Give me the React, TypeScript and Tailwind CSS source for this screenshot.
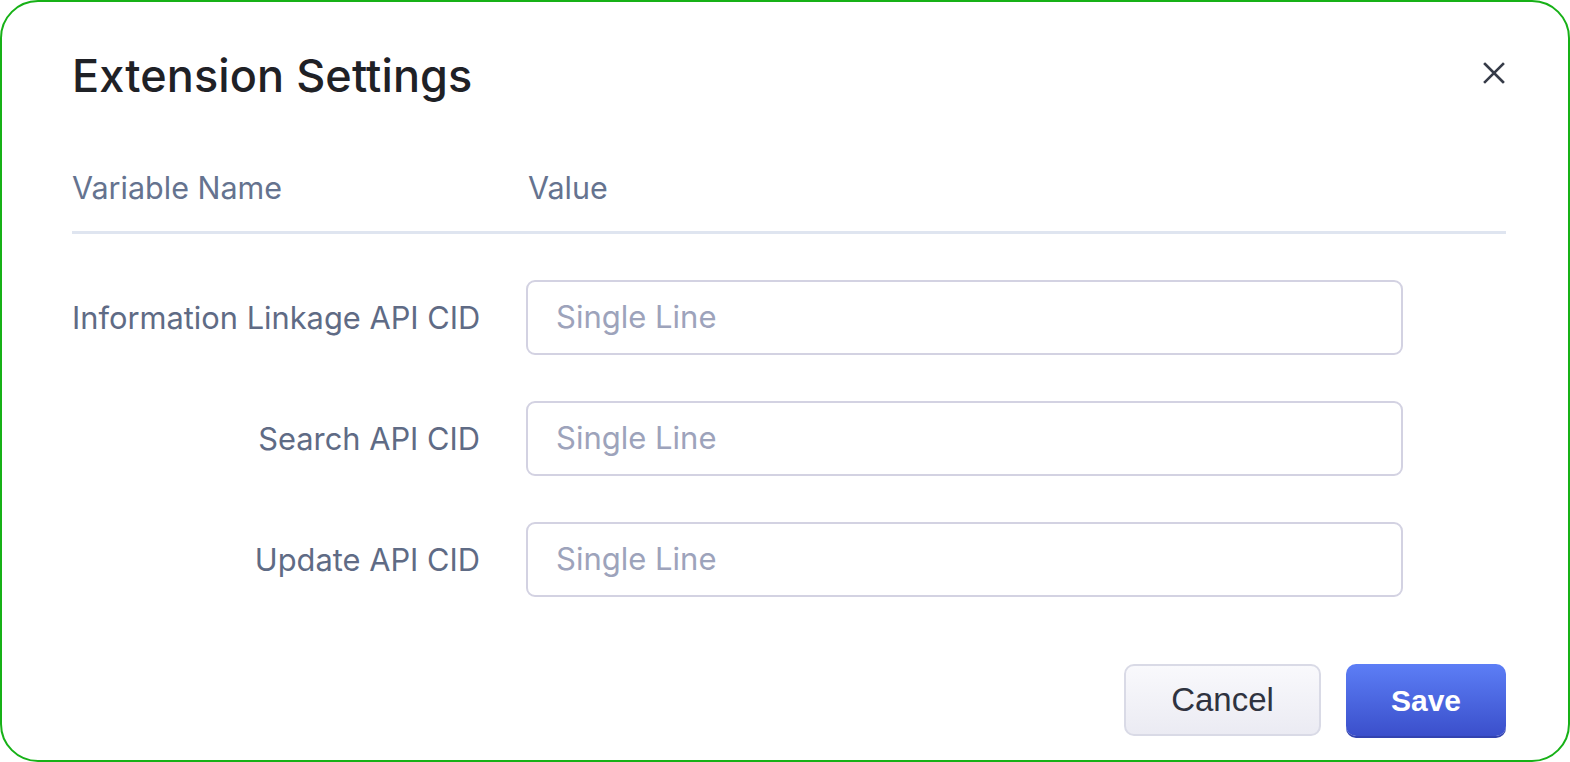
import React from "react";

const rows = ["Information Linkage API CID", "Search API CID", "Update API CID"];

export default function App() {
  return (
    <div className="w-[1570px] h-[762px] bg-white">
      <div
        className="w-[1570px] h-[762px] border-2 border-[#17b117] rounded-[38px] bg-white flex flex-col pl-[70px] pr-[64px]"
        style={{ fontFamily: "Inter, 'Noto Sans', sans-serif" }}
      >
        <div className="flex items-start justify-between pt-[44px] h-[110px]">
          <h1 className="text-[45px] leading-[60px] font-medium text-[#1f2126] tracking-[0.1px]">Extension Settings</h1>
          <button className="mt-[15px] mr-[-2px] text-[#363b48]">
            <svg width="24" height="24" viewBox="0 0 24 24" fill="none" stroke="currentColor" strokeWidth="2.6" strokeLinecap="square">
              <path d="M3 3L21 21M21 3L3 21" />
            </svg>
          </button>
        </div>
        <div className="flex mt-[56px] text-[30.5px] leading-[40px] text-[#65738f]">
          <div className="w-[456px]">Variable Name</div>
          <div>Value</div>
        </div>
        <div className="h-[3px] bg-[#dfe5f0] mt-[23px] mr-[-2px]" />
        <div className="flex flex-col gap-[46px] mt-[46px]">
          {rows.map((r) => (
            <div key={r} className="flex items-center">
              <div className="w-[408px] text-right text-[30.8px] text-[#5f6b85] leading-[40px] whitespace-nowrap">{r}</div>
              <div className="ml-[46px] w-[877px] h-[75px] border-2 border-[#d3d2e2] rounded-[9px] flex items-center pl-[28px] text-[31px] text-[#9da3bb]">
                Single Line
              </div>
            </div>
          ))}
        </div>
        <div className="flex justify-end gap-[25px] mt-[67px] mr-[-2px]" style={{ fontFamily: "'Liberation Sans', Arial, sans-serif" }}>
          <button className="w-[197px] h-[72px] rounded-[10px] border-2 border-[#d9dae6] bg-gradient-to-b from-[#f9f9fc] to-[#ebebf3] text-[33px] text-[#2f3340]">
            Cancel
          </button>
          <button className="w-[160px] h-[72px] rounded-[10px] bg-gradient-to-b from-[#5d7ef6] to-[#3b4fcb] text-[30px] font-bold text-white shadow-[0_2px_0_#3343b0]">
            Save
          </button>
        </div>
      </div>
    </div>
  );
}
